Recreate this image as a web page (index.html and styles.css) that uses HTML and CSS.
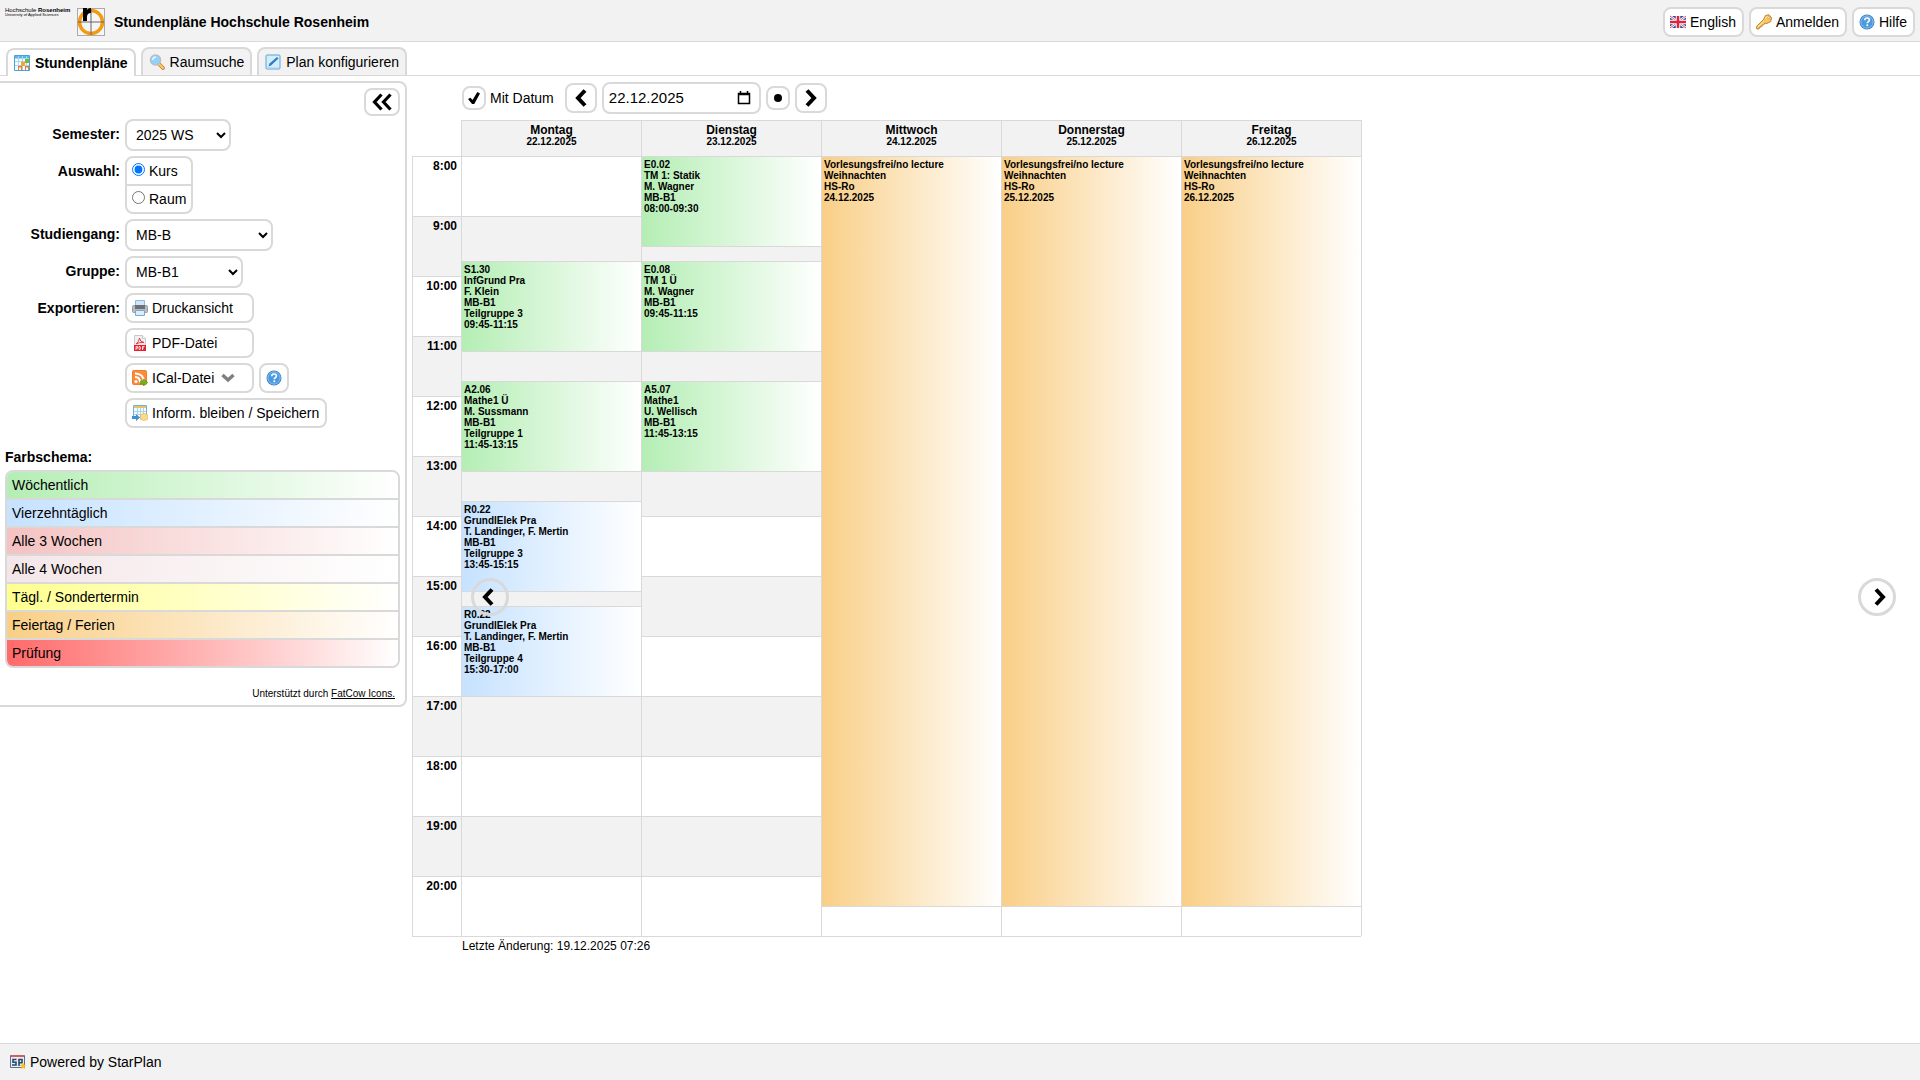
FILE: index.html
```html
<!DOCTYPE html>
<html lang="de">
<head>
  <meta charset="utf-8">
  <title>Stundenpläne Hochschule Rosenheim</title>
  <link rel="stylesheet" href="styles.css">
</head>
<body>
  <svg class="sprite" aria-hidden="true">
    <symbol id="help" viewBox="0 0 16 16">
      <circle cx="8" cy="8" r="7.5" fill="#2f7cc4"/>
      <circle cx="8" cy="8" r="6.2" fill="#4a9ae0" stroke="#a9d2f5" stroke-width=".8"/>
      <path d="M5.7 6.2C5.8 4.6 6.8 4 8.1 4c1.400 0 2.300.8 2.300 2 0 1.700-2.100 1.700-2.100 3.300" fill="none" stroke="#fff" stroke-width="1.700"/>
      <rect x="7.400" y="10.400" width="1.800" height="1.700" fill="#fff"/>
    </symbol>
    <symbol id="left" viewBox="0 0 16 20">
      <path d="M12 2.500 5 10l7 7.500" fill="none" stroke="#000" stroke-width="4"/>
    </symbol>
    <symbol id="right" viewBox="0 0 16 20">
      <path d="M4 2.500 11 10l-7 7.500" fill="none" stroke="#000" stroke-width="4"/>
    </symbol>
  </svg>

  <header class="header">
    <svg class="logo-text" viewBox="0 0 68 10" role="img" aria-label="Hochschule Rosenheim">
      <text x="0" y="5" class="logo-name">Hochschule <tspan font-weight="bold">Rosenheim</tspan></text>
      <text x="0" y="9" class="logo-sub">University of Applied Sciences</text>
    </svg>
    <svg class="logo" viewBox="0 0 28 28">
      <rect x=".5" y=".5" width="27" height="27" fill="#f6f6f6" stroke="#aaa"/>
      <circle cx="14" cy="14" r="11.500" fill="none" stroke="#f39a12" stroke-width="3.500"/>
      <path d="M14 1v26M1 14h26" stroke="#666"/>
      <path d="M6 0h4v2q1-2 4-2v5q-4 0-4 4v4H6z" fill="#000"/>
    </svg>
    <h1>Stundenpläne Hochschule Rosenheim</h1>
    <nav class="header-buttons">
      <button class="btn">
        <svg class="icon" viewBox="0 0 16 16">
          <path fill="#2a4f9e" d="M0 2h16v12H0z"/>
          <path d="m0 2 16 12M16 2 0 14" stroke="#fff" stroke-width="2.500"/>
          <path d="m0 2 16 12M16 2 0 14" stroke="#d8263c" stroke-width=".8"/>
          <path d="M8 2v12M0 8h16" stroke="#fff" stroke-width="4.500"/>
          <path d="M8 2v12M0 8h16" stroke="#dc2340" stroke-width="2.500"/>
        </svg>
        English
      </button>
      <button class="btn">
        <svg class="icon" viewBox="0 0 16 16">
          <path d="M9.500 1.500 13 .8l2.500 3-.7 3.700-4 2-2-.4-1 1.700-1.700.2-.4 1.700-1.700.2-1 2H.7v-2.700l6.700-6.400z" fill="#fac661" stroke="#b98332"/>
          <path d="m1.800 13 6-5.700M9 4.300l3-1.800" stroke="#ffe9a8"/>
          <circle cx="12.700" cy="3.700" r="1.100" fill="#fff" stroke="#b98332" stroke-width=".6"/>
        </svg>
        Anmelden
      </button>
      <button class="btn">
        <svg class="icon"><use href="#help"/></svg>
        Hilfe
      </button>
    </nav>
  </header>

  <nav class="tabs">
    <a class="tab active" href="#plan">
      <svg class="icon" viewBox="0 0 16 16">
        <path fill="#f8fcff" stroke="#4aa3d6" d="M.5.500h15v15H.5z"/>
        <path fill="#5fb6e6" d="M1 1h14v2.500H1z"/>
        <path d="M4.500 1v14M8.500 1v14M12.500 1v14M1 6.500h14M1 10.500h14" stroke="#a9d4ee"/>
        <path fill="#f2a72e" d="M7 7h4v4H7z"/>
        <path fill="#7cb832" d="M11 4h4v4h-4z"/>
        <path fill="#e87840" d="M4 11h4v4H4zm7 0h4v4h-4z"/>
        <path fill="#fff" d="M5 12.500h2v2.500H5zm7 0h2v2.500h-2z"/>
      </svg>
      Stundenpläne
    </a>
    <a class="tab" href="#raum">
      <svg class="icon" viewBox="0 0 16 16">
        <path d="m9 9 5 5" stroke="#bb7a2b" stroke-width="3.600" stroke-linecap="round"/>
        <path d="m9.500 9.500 4.500 4.500" stroke="#ffcb6b" stroke-width="2" stroke-linecap="round"/>
        <circle cx="6.500" cy="6" r="5" fill="#8fd3fa" stroke="#b9bec4" stroke-width="1.600"/>
        <path d="M3.500 6Q4 3 7 3" fill="none" stroke="#e8f8ff" stroke-width="1.500"/>
      </svg>
      Raumsuche
    </a>
    <a class="tab" href="#konfig">
      <svg class="icon" viewBox="0 0 16 16">
        <rect x="1" y="1" width="14" height="14" rx="1" fill="#d5ecfa" stroke="#5ba3d9"/>
        <path d="m3.500 12.500 1-3L12 3l1.500 1.500L6 11.500z" fill="#2d7fc4"/>
        <path d="M2 14h12" stroke="#a9d4ee"/>
      </svg>
      Plan konfigurieren
    </a>
  </nav>

  <main class="main">
    <aside class="panel">
      <div class="panel-top">
        <button class="btn collapse" aria-label="Einklappen">
          <svg viewBox="0 0 20 18"><path d="M9.500 1.500 2.500 9l7 7.500M18.500 1.500l-7 7.500 7 7.500" fill="none" stroke="#000" stroke-width="3.200"/></svg>
        </button>
      </div>

      <form class="form">
        <label class="name" for="semester">Semester:</label>
        <select id="semester" class="w-s"><option>2025 WS</option></select>

        <span class="name" id="auswahl">Auswahl:</span>
        <div class="radios" role="radiogroup" aria-labelledby="auswahl">
          <label><input type="radio" name="auswahl" checked>Kurs</label>
          <label><input type="radio" name="auswahl">Raum</label>
        </div>

        <label class="name" for="studiengang">Studiengang:</label>
        <select id="studiengang" class="w-l"><option>MB-B</option></select>

        <label class="name" for="gruppe">Gruppe:</label>
        <select id="gruppe" class="w-m"><option>MB-B1</option></select>

        <span class="name">Exportieren:</span>
        <div class="exports">
          <button type="button" class="btn wide">
            <svg class="icon" viewBox="0 0 16 16">
              <path d="M3.500.500h9V6h-9z" fill="#cfe6fa" stroke="#8fb9dc"/>
              <rect x=".5" y="5.500" width="15" height="7" rx="1" fill="#b9bcc0" stroke="#999da2"/>
              <path d="M3 5h10v4H3z" fill="#6c7076"/>
              <path d="M3.500 10.500h9v5h-9z" fill="#d9edfb" stroke="#7fa9cc"/>
            </svg>
            Druckansicht
          </button>
          <button type="button" class="btn wide">
            <svg class="icon" viewBox="0 0 16 16">
              <path d="M2.500.500h8l3 3v12h-11z" fill="#f1f1f3" stroke="#c9c9cd"/>
              <path d="M10.500.500v3h3" fill="#fff" stroke="#c9c9cd"/>
              <path d="M4 9q3-2 3.500-6Q8 7 12 7.500 7 7 4 9" fill="none" stroke="#e8394a"/>
              <path fill="#e5202c" d="M2 10h12v6H2z"/>
              <path d="M4 15v-3.500h1.500v1.800H4M7 11.500v3h1l.7-1.500-.7-1.500zM10.500 15v-3.500h2M10.500 13h1.500" fill="none" stroke="#fff" stroke-width=".8"/>
            </svg>
            PDF-Datei
          </button>
          <div class="pair">
            <button type="button" class="btn wide">
              <svg class="icon" viewBox="0 0 16 16">
                <rect x=".5" y=".5" width="14" height="14" rx="1" fill="#f98b3b" stroke="#ef7d2c"/>
                <path d="M3 7q5 0 5 5.500M3 3.500q9 0 9 9" fill="none" stroke="#fff" stroke-width="1.800"/>
                <circle cx="4" cy="11.500" r="1.500" fill="#fff"/>
                <path d="M8.500 11h3V9l4.300 3.500-4.300 3.500v-2h-3z" fill="#72b51d" stroke="#4f9412" stroke-width=".6"/>
              </svg>
              ICal-Datei
              <svg class="caret" viewBox="0 0 14 10"><path d="m1.500 2 5.500 5 5.500-5" fill="none" stroke="#808080" stroke-width="3.500"/></svg>
            </button>
            <button type="button" class="btn square" aria-label="Hilfe"><svg class="icon"><use href="#help"/></svg></button>
          </div>
          <button type="button" class="btn">
            <svg class="icon" viewBox="0 0 16 16">
              <path fill="#f3faff" stroke="#6db2dc" d="M1.500.500h13v12h-13z"/>
              <path fill="#e7c468" d="M2 1h12v2H2z"/>
              <path d="M5.500 3v9M8.500 3v9M11.500 3v9M2 6.500h12M2 9.500h12" stroke="#acd3eb"/>
              <path d="M0 11h4V9.200L8 12.500 4 16v-2H0z" fill="#3f90cf"/>
              <path d="m8.500 9.500 3.500-1 3.500 1v5l-3.500 1-3.500-1z" fill="#f9dc8b" stroke="#dcb452" stroke-width=".6"/>
            </svg>
            Inform. bleiben / Speichern
          </button>
        </div>
      </form>

      <h2>Farbschema:</h2>
      <ul class="legend">
        <li class="weekly">Wöchentlich</li>
        <li class="biweekly">Vierzehntäglich</li>
        <li class="three">Alle 3 Wochen</li>
        <li class="four">Alle 4 Wochen</li>
        <li class="daily">Tägl. / Sondertermin</li>
        <li class="holiday">Feiertag / Ferien</li>
        <li class="exam">Prüfung</li>
      </ul>
      <p class="credits">Unterstützt durch <a href="#icons">FatCow Icons.</a></p>
    </aside>

    <section class="plan" id="plan">
      <div class="toolbar">
        <label class="with-date"><input type="checkbox" checked>Mit Datum</label>
        <button class="btn nav" aria-label="Vorherige Woche"><svg><use href="#left"/></svg></button>
        <div class="date">
          <input type="text" value="22.12.2025" aria-label="Datum">
          <svg viewBox="0 0 14 14"><path d="M1.500 2.500h11v10h-11zM1 3.500h12M3.500 0v2M10.500 0v2" fill="none" stroke="#000" stroke-width="1.500"/></svg>
        </div>
        <button class="btn today" aria-label="Heute"></button>
        <button class="btn nav" aria-label="Nächste Woche"><svg><use href="#right"/></svg></button>
      </div>

      <div class="calendar">
        <div class="corner"></div>
        <div class="day-name">Montag<small>22.12.2025</small></div>
        <div class="day-name">Dienstag<small>23.12.2025</small></div>
        <div class="day-name">Mittwoch<small>24.12.2025</small></div>
        <div class="day-name">Donnerstag<small>25.12.2025</small></div>
        <div class="day-name">Freitag<small>26.12.2025</small></div>

        <div class="hours">
          <span>8:00</span>
          <span>9:00</span>
          <span>10:00</span>
          <span>11:00</span>
          <span>12:00</span>
          <span>13:00</span>
          <span>14:00</span>
          <span>15:00</span>
          <span>16:00</span>
          <span>17:00</span>
          <span>18:00</span>
          <span>19:00</span>
          <span>20:00</span>
        </div>

        <!-- one grid row per quarter of an hour, row 1 is 8:00 -->
        <div class="day">
          <div class="event weekly" style="grid-row: 8 / span 6">S1.30<br>InfGrund Pra<br>F. Klein<br>MB-B1<br>Teilgruppe 3<br>09:45-11:15</div>
          <div class="event weekly" style="grid-row: 16 / span 6">A2.06<br>Mathe1 Ü<br>M. Sussmann<br>MB-B1<br>Teilgruppe 1<br>11:45-13:15</div>
          <div class="event biweekly" style="grid-row: 24 / span 6">R0.22<br>GrundlElek Pra<br>T. Landinger, F. Mertin<br>MB-B1<br>Teilgruppe 3<br>13:45-15:15</div>
          <div class="event biweekly" style="grid-row: 31 / span 6">R0.22<br>GrundlElek Pra<br>T. Landinger, F. Mertin<br>MB-B1<br>Teilgruppe 4<br>15:30-17:00</div>
        </div>
        <div class="day">
          <div class="event weekly" style="grid-row: 1 / span 6">E0.02<br>TM 1: Statik<br>M. Wagner<br>MB-B1<br>08:00-09:30</div>
          <div class="event weekly" style="grid-row: 8 / span 6">E0.08<br>TM 1 Ü<br>M. Wagner<br>MB-B1<br>09:45-11:15</div>
          <div class="event weekly" style="grid-row: 16 / span 6">A5.07<br>Mathe1<br>U. Wellisch<br>MB-B1<br>11:45-13:15</div>
        </div>
        <div class="day">
          <div class="event holiday" style="grid-row: 1 / span 50">Vorlesungsfrei/no lecture<br>Weihnachten<br>HS-Ro<br>24.12.2025</div>
        </div>
        <div class="day">
          <div class="event holiday" style="grid-row: 1 / span 50">Vorlesungsfrei/no lecture<br>Weihnachten<br>HS-Ro<br>25.12.2025</div>
        </div>
        <div class="day">
          <div class="event holiday" style="grid-row: 1 / span 50">Vorlesungsfrei/no lecture<br>Weihnachten<br>HS-Ro<br>26.12.2025</div>
        </div>
      </div>
      <p class="changed">Letzte Änderung: 19.12.2025 07:26</p>

      <button class="round prev" aria-label="Zurück"><svg><use href="#left"/></svg></button>
      <button class="round next" aria-label="Weiter"><svg><use href="#right"/></svg></button>
    </section>
  </main>

  <footer class="footer">
    <svg class="icon" viewBox="0 0 16 16">
      <path fill="#e9eef5" stroke="#5c6f8e" d="M.5 1.500h14v12H.5z"/>
      <path fill="#d0605e" d="M1 1h13v2H1z"/>
      <path d="M6.500 5.500H3v2.700h3v2.800H2M9 12V5.500h3v3.200H9" fill="none" stroke="#26466f" stroke-width="1.600"/>
      <path d="m13 8.500 1 2 2 .5-1.500 1.500.5 2.500-2-1-2 1 .5-2.500L10 11l2-.5z" fill="#f8c31c"/>
    </svg>
    Powered by StarPlan
  </footer>
</body>
</html>
```

FILE: styles.css
```css
* {
  box-sizing: border-box;
}
body {
  margin: 0;
  min-height: 100vh;
  display: flex;
  flex-direction: column;
  font-family: "Liberation Sans", Arial, sans-serif;
  font-size: 14px;
  line-height: 16px;
  color: #000;
  background: #fff;
}
button, select, input {
  font: inherit;
  color: inherit;
}
a {
  color: inherit;
}
.sprite {
  display: none;
}
.icon {
  width: 16px;
  height: 16px;
  flex: none;
}

.btn {
  display: flex;
  align-items: center;
  gap: 4px;
  height: 30px;
  padding: 0 6px 0 5px;
  border: 2px solid #d9d9d9;
  border-radius: 8px;
  background: #fff;
  cursor: pointer;
}
.btn:hover {
  background: #f2f2f2;
}

/* header */
.header {
  display: flex;
  align-items: center;
  height: 42px;
  padding: 2px 5px 0;
  background: #f2f2f2;
  border-bottom: 1px solid #d9d9d9;
}
.logo-text {
  width: 68px;
  height: 10px;
  align-self: flex-start;
  margin-top: 5px;
}
.logo-name {
  font-size: 6px;
}
.logo-sub {
  font-size: 4px;
}
.logo {
  width: 28px;
  height: 28px;
  margin: 0 9px 0 4px;
}
.header h1 {
  margin: 0;
  font-size: 14px;
}
.header-buttons {
  display: flex;
  gap: 5px;
  margin-left: auto;
}

/* tabs */
.tabs {
  display: flex;
  align-items: flex-end;
  gap: 5px;
  height: 34px;
  padding: 0 6px;
  border-bottom: 1px solid #d9d9d9;
}
.tab {
  display: flex;
  align-items: center;
  gap: 5px;
  height: 28px;
  padding: 0 6px;
  border: 2px solid #d9d9d9;
  border-bottom: none;
  border-radius: 8px 8px 0 0;
  background: #f2f2f2;
  text-decoration: none;
}
.tab.active {
  margin-bottom: -1px;
  background: #fff;
  font-weight: bold;
}

.main {
  flex: 1;
  display: flex;
  align-items: flex-start;
  gap: 5px;
  padding-top: 5px;
}

/* settings panel */
.panel {
  width: 407px;
  padding: 5px;
  border: 2px solid #d9d9d9;
  border-left: none;
  border-radius: 0 8px 8px 0;
}
.panel-top {
  display: flex;
  justify-content: flex-end;
}
.collapse {
  width: 36px;
  height: 28px;
  padding: 0;
  justify-content: center;
}
.collapse svg {
  width: 20px;
  height: 18px;
  flex: none;
}
.form {
  display: grid;
  grid-template-columns: 115px 1fr;
  justify-items: start;
  gap: 5px;
  margin-top: 3px;
}
.name {
  justify-self: end;
  padding-top: 7px;
  font-weight: bold;
}
select {
  height: 32px;
  padding: 0 5px;
  border: 2px solid #d9d9d9;
  border-radius: 8px;
  background: #fff;
}
.w-s { width: 106px; }
.w-m { width: 118px; }
.w-l { width: 148px; }
.radios {
  border: 2px solid #d9d9d9;
  border-radius: 8px;
}
.radios label {
  display: flex;
  gap: 4px;
  height: 26px;
  padding: 5px;
}
.radios label + label {
  height: 28px;
  border-top: 2px solid #d9d9d9;
}
.radios input {
  width: 13px;
  height: 13px;
  margin: 0;
}
.exports {
  display: flex;
  flex-direction: column;
  align-items: flex-start;
  gap: 5px;
}
.wide {
  width: 129px;
}
.square {
  width: 30px;
}
.pair {
  display: flex;
  gap: 5px;
}
.caret {
  width: 14px;
  height: 10px;
  margin-left: 3px;
}
.panel h2 {
  margin: 21px 0 5px;
  font-size: 14px;
}
.legend {
  margin: 0;
  padding: 0;
  list-style: none;
  border: 2px solid #d9d9d9;
  border-radius: 8px;
  overflow: hidden;
}
.legend li {
  height: 28px;
  padding: 5px;
  border-bottom: 2px solid #d9d9d9;
}
.legend li:last-child {
  height: 26px;
  border-bottom: none;
}
.credits {
  margin: 20px 5px 0;
  font-size: 10px;
  line-height: 12px;
  text-align: right;
}

.weekly { background: linear-gradient(to right, #b4eeb4, #fff); }
.biweekly { background: linear-gradient(to right, #c6e2ff, #fff); }
.three { background: linear-gradient(to right, #f4c2c2, #fff); }
.four { background: linear-gradient(to right, #f4e6e8, #fff); }
.daily { background: linear-gradient(to right, #ffff8f, #fff); }
.holiday { background: linear-gradient(to right, #f9cf87, #fff); }
.exam { background: linear-gradient(to right, #ff6a6a, #fff); }

/* timetable */
.toolbar {
  display: flex;
  align-items: center;
  gap: 5px;
  height: 34px;
  margin: 0 0 5px 50px;
}
.with-date {
  display: flex;
  align-items: center;
  gap: 4px;
  margin-right: 6px;
}
.with-date input {
  appearance: none;
  display: grid;
  place-items: center;
  width: 24px;
  height: 24px;
  margin: 0;
  border: 2px solid #d9d9d9;
  border-radius: 8px;
}
.with-date input:checked::before {
  content: "";
  width: 12px;
  height: 12px;
  background: #000;
  clip-path: polygon(0 58%, 20% 48%, 38% 66%, 78% 0, 100% 12%, 52% 100%, 34% 100%);
}
.nav {
  width: 32px;
  padding: 0;
  justify-content: center;
}
.nav svg, .round svg {
  width: 16px;
  height: 20px;
  flex: none;
}
.date {
  display: flex;
  align-items: center;
  width: 159px;
  height: 32px;
  padding: 0 8px 0 5px;
  border: 2px solid #d9d9d9;
  border-radius: 8px;
}
.date input {
  flex: 1;
  min-width: 0;
  padding: 0;
  border: none;
  outline: none;
  font-size: 15px;
}
.date svg {
  width: 14px;
  height: 14px;
}
.today {
  width: 24px;
  height: 24px;
  padding: 0;
  justify-content: center;
}
.today::before {
  content: "";
  width: 8px;
  height: 8px;
  flex: none;
  border-radius: 50%;
  background: #000;
}
.calendar {
  display: grid;
  grid-template-columns: 49px repeat(5, 180px);
  width: max-content;
  border-bottom: 1px solid #d9d9d9;
}
.day-name {
  height: 36px;
  padding-top: 3px;
  border-top: 1px solid #d9d9d9;
  border-left: 1px solid #d9d9d9;
  background: #f2f2f2;
  font-size: 12px;
  line-height: 12px;
  font-weight: bold;
  text-align: center;
}
.day-name small {
  display: block;
  font-size: 10px;
}
.day-name:nth-child(6), .day:last-child {
  width: 181px;
  border-right: 1px solid #d9d9d9;
}
.hours, .day {
  border-left: 1px solid #d9d9d9;
  background: repeating-linear-gradient(#d9d9d9 0 1px, #fff 1px 60px, #d9d9d9 60px 61px, #f2f2f2 61px 120px);
}
.hours span {
  display: block;
  height: 60px;
  padding: 3px 4px 0 0;
  font-size: 12px;
  line-height: 14px;
  font-weight: bold;
  text-align: right;
}
.day {
  display: grid;
  grid-template-rows: repeat(52, 15px);
}
.event {
  margin-bottom: -1px;
  padding: 2px;
  border: solid #d9d9d9;
  border-width: 1px 0;
  font-size: 10px;
  line-height: 11px;
  font-weight: bold;
  overflow: hidden;
}
.changed {
  margin: 2px 0 0 50px;
  font-size: 12px;
  line-height: 14px;
}

/* floating week arrows over the timetable */
.round {
  position: fixed;
  top: 578px;
  display: flex;
  align-items: center;
  justify-content: center;
  width: 38px;
  height: 38px;
  padding: 0;
  border: 3px solid #d9d9d9;
  border-radius: 50%;
  background: none;
  cursor: pointer;
}
.prev {
  left: 471px;
  padding-right: 5px;
}
.next {
  right: 24px;
  padding-left: 5px;
}

.footer {
  display: flex;
  align-items: center;
  gap: 4px;
  height: 37px;
  padding: 0 10px;
  background: #f2f2f2;
  border-top: 1px solid #d9d9d9;
}
```
